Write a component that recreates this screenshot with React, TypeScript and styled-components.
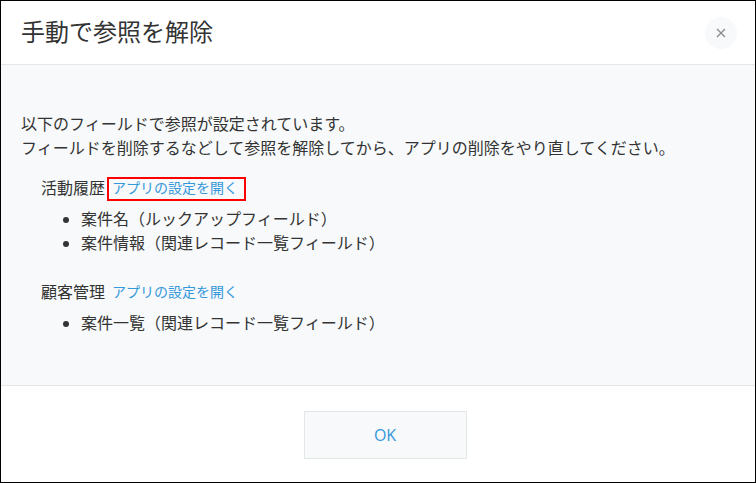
import React from 'react';
import styled, { createGlobalStyle } from 'styled-components';

const GlobalStyle = createGlobalStyle`
  html, body {
    margin: 0;
    padding: 0;
    background: #fff;
  }

  * {
    box-sizing: border-box;
  }
`;

const Dialog = styled.div`
  width: 756px;
  height: 483px;
  display: flex;
  flex-flow: column;
  background: white;
  border: 1px solid #000;
  color: #333;
  font-family: 'Open Sans', 'Noto Sans CJK JP', sans-serif;
  font-size: 16px;
  line-height: 24px;
`;

const Header = styled.header`
  height: 64px;
  flex: none;
  display: flex;
  align-items: center;
  justify-content: space-between;
  padding: 0 18px 2px 20px;
  border-bottom: 1px solid #e3e7e8;
`;

const Title = styled.h1`
  margin: 0;
  font-size: 24px;
  font-weight: 400;
  line-height: 32px;
`;

const CloseButton = styled.button`
  width: 32px;
  height: 32px;
  padding: 0;
  margin-top: 2px;
  display: inline-flex;
  align-items: center;
  justify-content: center;
  border: 0;
  border-radius: 50%;
  background: #f7f9fa;
  color: #888;
`;

const Body = styled.main`
  flex: 1;
  padding: 47px 20px 0;
  background: #f7f9fa;
  border-bottom: 1px solid #e3e7e8;
`;

const Message = styled.p`
  margin: 0 0 17px;
`;

const Group = styled.section`
  margin: 0 0 26px 20px;
`;

const GroupTitle = styled.div`
  display: flex;
  align-items: flex-start;
  height: 24px;
  line-height: 22px;
`;

const AppLink = styled.a<{ $highlighted?: boolean }>`
  margin-left: 2px;
  padding: 0 8px 2px 5px;
  height: 24px;
  font-size: 14px;
  line-height: 20px;
  color: #3498db;
  text-decoration: none;
  outline: ${(props) => (props.$highlighted ? '2px solid #f00' : 'none')};
  outline-offset: -2px;
  display: inline-flex;
  align-items: center;
`;

const FieldList = styled.ul`
  margin: 6px 0 0;
  padding: 0 0 0 40px;
`;

const Footer = styled.footer`
  height: 96px;
  flex: none;
  display: flex;
  align-items: flex-start;
  justify-content: center;
  padding: 25px 0 0 14px;
`;

const OkButton = styled.button`
  width: 163px;
  height: 48px;
  background: #f7f9fa;
  border: 1px solid #e3e7e8;
  color: #3498db;
  font-family: inherit;
  font-size: 16px;
`;

const groups = [
  {
    name: '活動履歴',
    highlighted: true,
    fields: ['案件名（ルックアップフィールド）', '案件情報（関連レコード一覧フィールド）']
  },
  {
    name: '顧客管理',
    highlighted: false,
    fields: ['案件一覧（関連レコード一覧フィールド）']
  }
];

const App: React.FC = () => (
  <React.Fragment>
    <GlobalStyle />
    <Dialog>
      <Header>
        <Title>手動で参照を解除</Title>
        <CloseButton aria-label="閉じる">
          <svg width="10" height="10" viewBox="0 0 10 10">
            <path d="M1 1l8 8M9 1l-8 8" stroke="currentColor" strokeWidth="1.2" fill="none" />
          </svg>
        </CloseButton>
      </Header>
      <Body>
        <Message>
          以下のフィールドで参照が設定されています。
          <br />
          フィールドを削除するなどして参照を解除してから、アプリの削除をやり直してください。
        </Message>
        {groups.map(({ name, highlighted, fields }) => (
          <Group key={name}>
            <GroupTitle>
              {name}
              <AppLink href="#" $highlighted={highlighted}>
                アプリの設定を開く
              </AppLink>
            </GroupTitle>
            <FieldList>
              {fields.map((field) => (
                <li key={field}>{field}</li>
              ))}
            </FieldList>
          </Group>
        ))}
      </Body>
      <Footer>
        <OkButton>OK</OkButton>
      </Footer>
    </Dialog>
  </React.Fragment>
);

export default App;
